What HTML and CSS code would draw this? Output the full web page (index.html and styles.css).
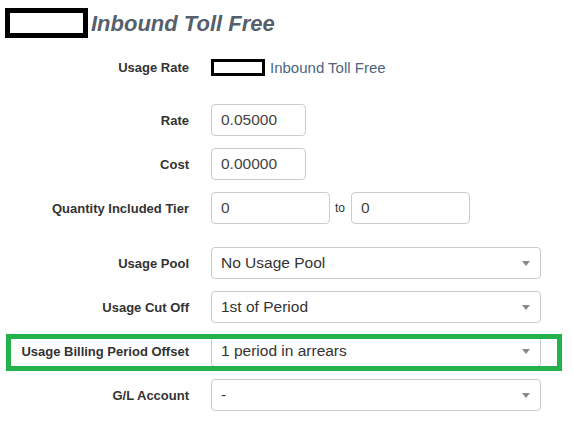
FILE: index.html
```html
<!DOCTYPE html>
<html>
<head>
<meta charset="utf-8">
<link rel="stylesheet" href="styles.css">
</head>
<body>
<div class="page">
  <h1 class="title"><span class="redact redact-lg"></span><span class="title-text">Inbound Toll Free</span></h1>
  <div class="form">
    <div class="row row-static">
      <div class="label">Usage Rate</div>
      <div class="static"><span class="redact redact-sm"></span><span class="static-text">Inbound Toll Free</span></div>
    </div>

    <div class="group">
      <div class="row">
        <div class="label">Rate</div>
        <div class="input input-sm">0.05000</div>
      </div>
      <div class="row">
        <div class="label">Cost</div>
        <div class="input input-sm">0.00000</div>
      </div>
      <div class="row">
        <div class="label">Quantity Included Tier</div>
        <div class="range">
          <div class="input input-md">0</div>
          <span class="to">to</span>
          <div class="input input-md">0</div>
        </div>
      </div>
    </div>

    <div class="group">
      <div class="row">
        <div class="label">Usage Pool</div>
        <div class="select">No Usage Pool<span class="caret"></span></div>
      </div>
      <div class="row">
        <div class="label">Usage Cut Off</div>
        <div class="select">1st of Period<span class="caret"></span></div>
      </div>
      <div class="row row-highlight">
        <div class="label">Usage Billing Period Offset</div>
        <div class="select">1 period in arrears<span class="caret"></span></div>
      </div>
      <div class="row">
        <div class="label">G/L Account</div>
        <div class="select">-<span class="caret"></span></div>
      </div>
    </div>
  </div>
</div>
</body>
</html>
```

FILE: styles.css
```css
html, body {
  margin: 0;
  padding: 0;
  background: #ffffff;
}

body {
  font-family: "Liberation Sans", Arial, sans-serif;
  color: #333333;
}

.page {
  padding: 8px 0 0 5px;
}

.title {
  display: flex;
  align-items: center;
  margin: 0 0 13px 0;
  height: 30px;
}

.redact {
  display: block;
  box-sizing: border-box;
  background: #ffffff;
  border: 5px solid #000000;
}

.redact-lg {
  width: 83px;
  height: 30px;
}

.redact-sm {
  width: 54px;
  height: 17px;
  border-width: 3px;
}

.title-text {
  margin-left: 3px;
  font-size: 22px;
  font-weight: bold;
  font-style: italic;
  color: #56606c;
  position: relative;
  top: 1px;
}

.form {
  display: flex;
  flex-direction: column;
}

.group {
  display: flex;
  flex-direction: column;
  gap: 12px;
  margin-top: 21px;
}

.group + .group {
  margin-top: 23px;
}

.row {
  display: flex;
  align-items: center;
  height: 32px;
}

.label {
  width: 184px;
  flex: none;
  text-align: right;
  font-size: 13px;
  font-weight: bold;
  color: #333333;
  margin-right: 22px;
}

.static {
  display: flex;
  align-items: center;
  font-size: 15px;
}

.static-text {
  margin-left: 5px;
  color: #4d6580;
}

.input,
.select {
  box-sizing: border-box;
  height: 32px;
  border: 1px solid #cccccc;
  border-radius: 4px;
  padding: 0 9px;
  display: flex;
  align-items: center;
  font-size: 15.5px;
  color: #444444;
  background: #ffffff;
}

.input-sm {
  width: 95px;
}

.input-md {
  width: 119px;
}

.range {
  display: flex;
  align-items: center;
}

.to {
  font-size: 12px;
  color: #333333;
  margin: 0 6px 0 5px;
}

.select {
  width: 330px;
  position: relative;
  color: #333333;
}

.caret {
  position: absolute;
  right: 10px;
  top: 50%;
  margin-top: -2px;
  width: 0;
  height: 0;
  border-left: 4px solid transparent;
  border-right: 4px solid transparent;
  border-top: 5px solid #888888;
}

.row-highlight {
  position: relative;
}

.row-highlight::after {
  content: "";
  position: absolute;
  left: 1px;
  right: 10px;
  top: -1px;
  bottom: -4px;
  border: 5px solid #22b14c;
  pointer-events: none;
}
```
